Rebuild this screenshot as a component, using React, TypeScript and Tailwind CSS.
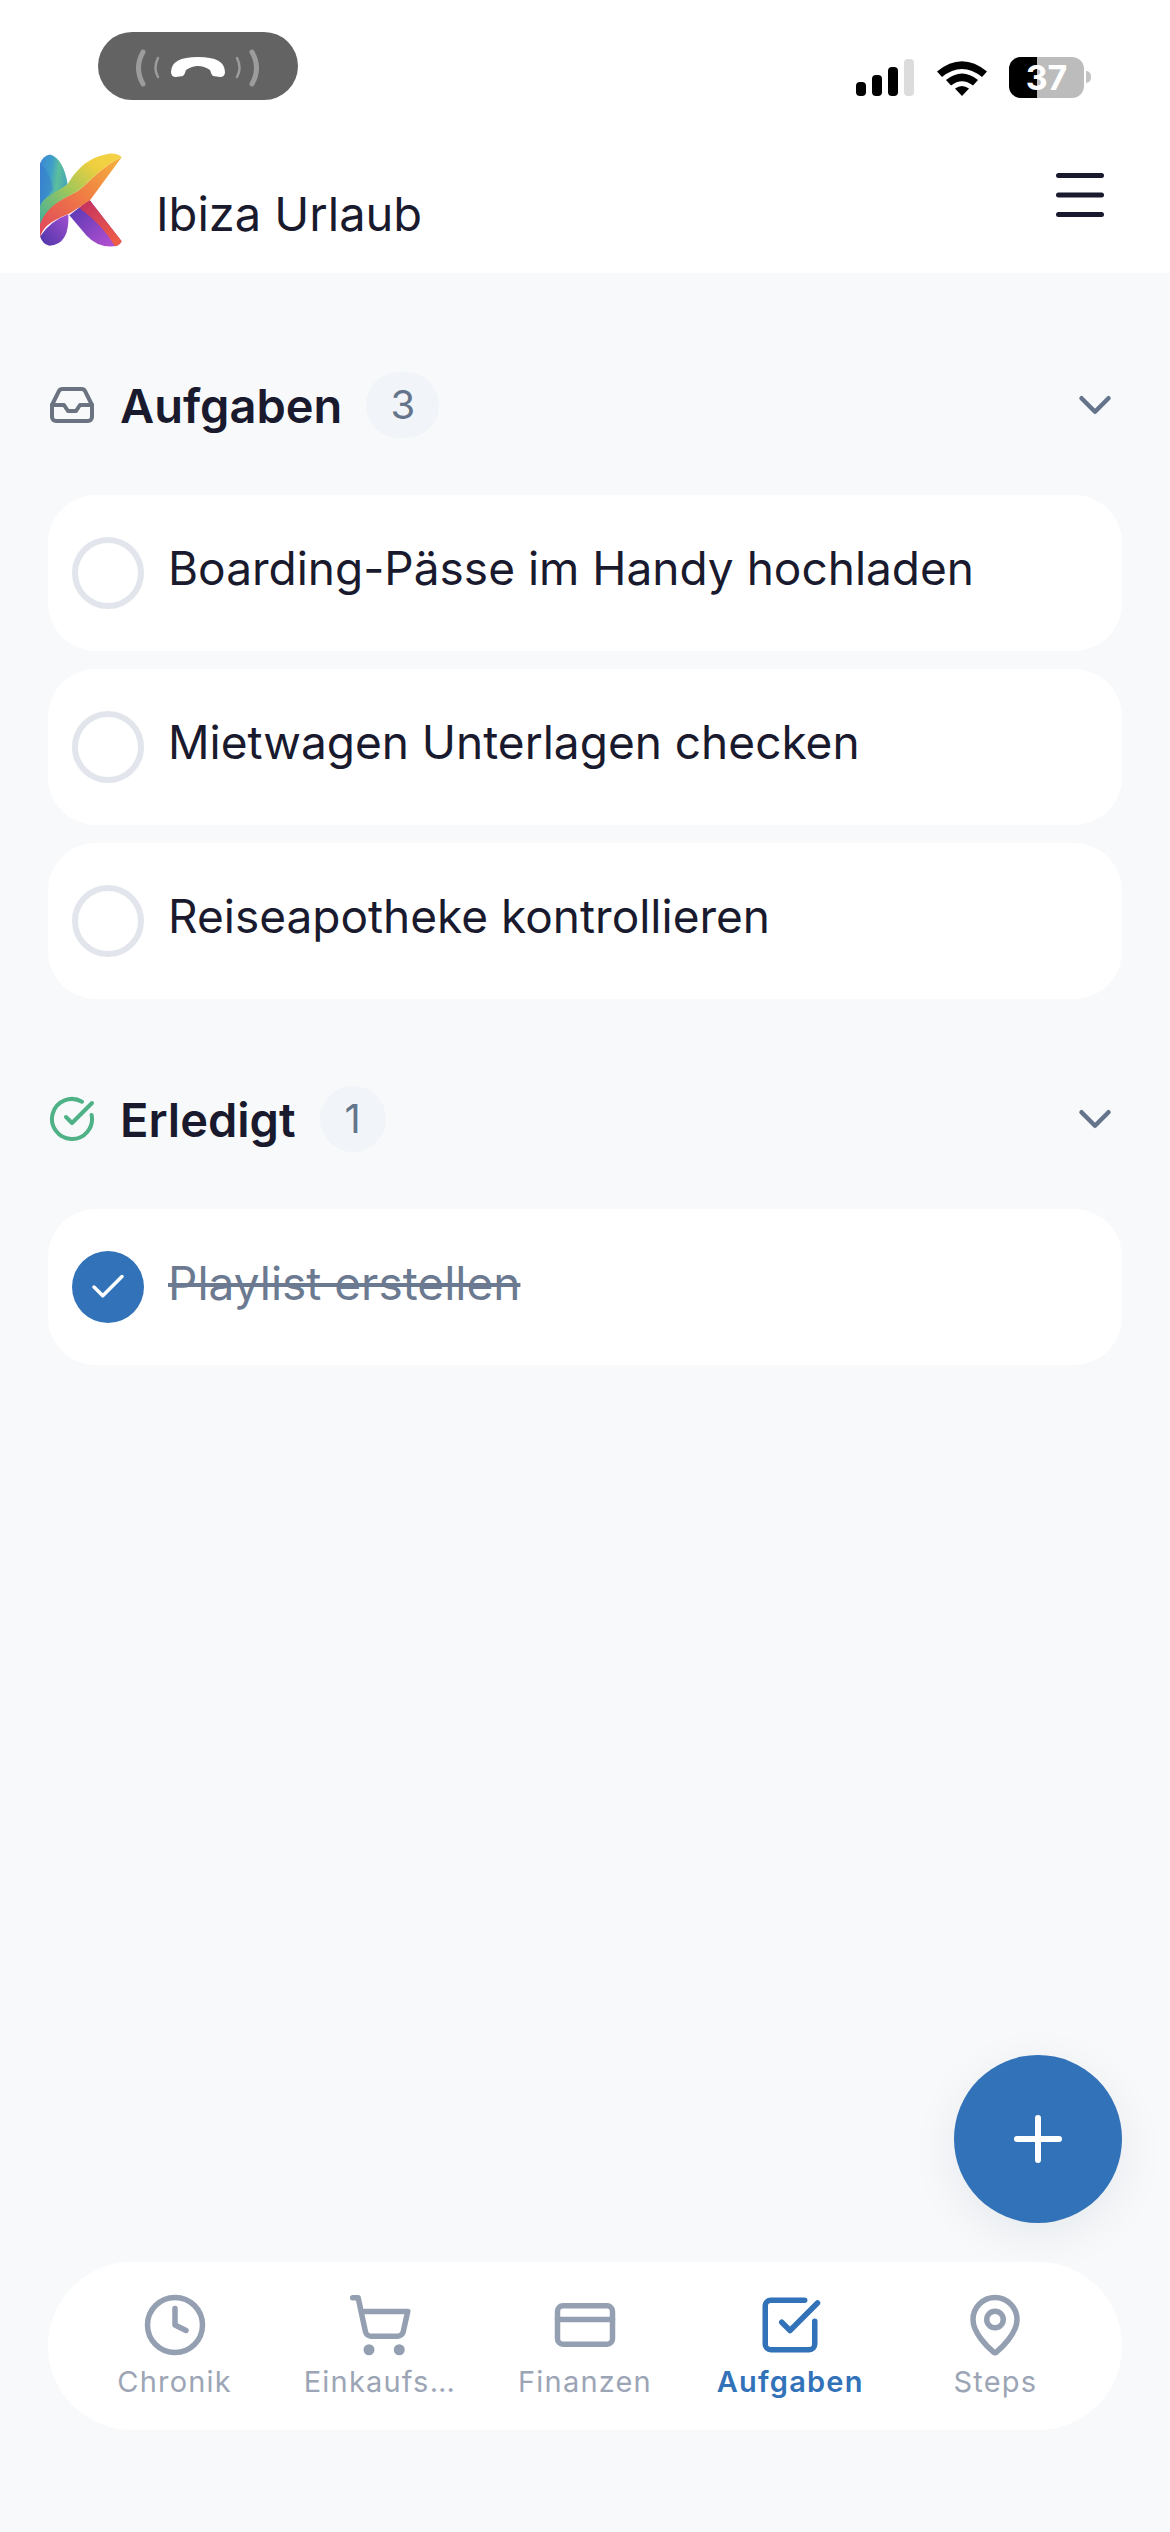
import { Inbox, CircleCheckBig, ChevronDown, Check, Plus, Clock, ShoppingCart, CreditCard, SquareCheckBig, MapPin } from "lucide-react";

function Logo() {
  return (
    <svg viewBox="60 73 246 282" className="w-[82px] h-[95px]">
      <defs>
        <linearGradient id="stem" x1="0" y1="0" x2="1" y2="0.25">
          <stop offset="0" stopColor="#3b86d6" />
          <stop offset="0.45" stopColor="#3f9fc8" />
          <stop offset="0.7" stopColor="#5cbf9c" />
          <stop offset="1" stopColor="#49a9b4" />
        </linearGradient>
        <linearGradient id="foot" x1="0" y1="1" x2="1" y2="0">
          <stop offset="0" stopColor="#4c35a8" />
          <stop offset="1" stopColor="#a24fd0" />
        </linearGradient>
        <linearGradient id="top" x1="0" y1="1" x2="1" y2="0">
          <stop offset="0" stopColor="#3fae9c" />
          <stop offset="0.4" stopColor="#9cc65c" />
          <stop offset="0.75" stopColor="#f0cf3e" />
          <stop offset="1" stopColor="#f5d24a" />
        </linearGradient>
        <linearGradient id="mid" x1="0" y1="1" x2="1" y2="0">
          <stop offset="0" stopColor="#e0455e" />
          <stop offset="0.5" stopColor="#ef7a45" />
          <stop offset="1" stopColor="#f5b43c" />
        </linearGradient>
        <linearGradient id="legl" x1="0" y1="0" x2="1" y2="1">
          <stop offset="0" stopColor="#4f37b0" />
          <stop offset="1" stopColor="#bd52d4" />
        </linearGradient>
        <linearGradient id="legr" x1="0" y1="0" x2="0.7" y2="1">
          <stop offset="0" stopColor="#c22f63" />
          <stop offset="1" stopColor="#ee5c46" />
        </linearGradient>
      </defs>
      <path d="M60 102 Q70 80 90 76 Q130 88 143 165 L60 236 Z" fill="url(#stem)" />
      <path d="M60 102 Q88 125 100 180 L60 225 Z" fill="#3570c8" opacity="0.35" />
      <path d="M60 322 Q90 275 145 255 Q150 345 88 350 Q68 345 60 322 Z" fill="url(#foot)" />
      <path d="M148 258 L208 212 L305 336 Q298 352 270 352 Q230 352 200 320 Z" fill="url(#legl)" />
      <path d="M178 236 L208 212 L305 336 Q298 350 285 351 Q250 290 178 236 Z" fill="url(#legr)" />
      <path d="M60 325 C70 290 95 275 150 252 L210 213 L305 84 C255 105 215 150 175 185 C130 210 85 225 60 270 Z" fill="url(#mid)" />
      <path d="M60 236 C65 205 100 195 143 165 C165 130 195 85 270 73 Q295 72 305 84 C255 105 215 150 175 185 C130 210 85 225 60 285 Z" fill="url(#top)" />
    </svg>
  );
}

function StatusIcons() {
  return (
    <div className="flex items-start">
      <div className="flex items-end gap-[6px] h-[37px] mt-[27px]">
        <div className="w-[10px] h-[14px] rounded-[4px] bg-black" />
        <div className="w-[10px] h-[21px] rounded-[4px] bg-black" />
        <div className="w-[10px] h-[29px] rounded-[4px] bg-black" />
        <div className="w-[10px] h-[37px] rounded-[4px] bg-[#dcdcdc]" />
      </div>
      <svg viewBox="0 0 50 37" className="w-[50px] h-[37px] mt-[27px] ml-[23px]">
        <path d="M0 12.5 Q25 -8 50 12.5 L45 18 Q25 2 5 18 Z" fill="#000" />
        <path d="M9 21 Q25 8 41 21 L36 26.5 Q25 18 14 26.5 Z" fill="#000" />
        <path d="M18 29.5 Q25 24.5 32 29.5 L25 37 Z" fill="#000" />
      </svg>
      <div className="relative w-[75px] h-[41px] mt-[25px] ml-[22px] rounded-[12px] overflow-hidden bg-[#bcbcbc] flex items-center justify-center">
        <div className="absolute left-0 top-0 bottom-0 w-[28px] bg-black" />
        <span className="relative text-white font-bold text-[34px] leading-none font-['Inter',sans-serif]">37</span>
      </div>
      <div className="w-[5px] h-[12px] mt-[39px] ml-[2px] rounded-r-full bg-[#c4c4c4]" />
    </div>
  );
}

function CallPill() {
  return (
    <div className="w-[200px] h-[68px] ml-[98px] rounded-[34px] bg-[#636363] flex items-center justify-center">
      <svg viewBox="0 0 200 68" className="w-[200px] h-[68px]">
        <g fill="none" stroke="#9c9c9c" strokeLinecap="round">
          <path d="M45 20 Q36 36 45 52" strokeWidth="5" />
          <path d="M60 26 Q55 36 60 45" strokeWidth="2.5" />
          <path d="M139 26 Q144 36 139 45" strokeWidth="2.5" />
          <path d="M154 20 Q163 36 154 52" strokeWidth="5" />
        </g>
        <path d="M73 40 Q73 25 100 25 Q127 25 127 40 Q127 45 122 45 L115 44 Q113 42 112 38 Q106 34 100 34 Q94 34 88 38 Q87 42 85 44 L78 45 Q73 45 73 40 Z" fill="#fff" />
      </svg>
    </div>
  );
}

function SectionHeader({ icon, title, count }: { icon: React.ReactNode; title: string; count: number }) {
  return (
    <div className="flex items-center h-[66px] mb-[57px]">
      {icon}
      <h2 className="ml-6 text-[47px] leading-none font-semibold text-[#1a1a2e]">{title}</h2>
      <span className="ml-6 h-[66px] min-w-[66px] px-6 rounded-full bg-[#f1f4f8] flex items-center justify-center text-[40px] leading-none text-[#64748b]">{count}</span>
      <ChevronDown className="ml-auto text-[#64748b]" size={54} strokeWidth={2} />
    </div>
  );
}

function Task({ text, done }: { text: string; done?: boolean }) {
  return (
    <div className="h-[156px] rounded-[48px] bg-white flex items-center pl-6 gap-6">
      {done ? (
        <div className="w-[72px] h-[72px] rounded-full bg-[#3272b8] flex items-center justify-center">
          <Check className="text-white" size={42} strokeWidth={2} />
        </div>
      ) : (
        <div className="w-[72px] h-[72px] rounded-full border-[6px] border-[#e2e6ec]" />
      )}
      <span className={done ? "text-[46px] leading-none text-[#6b7a90] line-through -mt-[9px]" : "text-[46px] leading-none text-[#1a1a2e] -mt-[10px]"}>{text}</span>
    </div>
  );
}

function NavItem({ icon, label, active }: { icon: React.ReactNode; label: string; active?: boolean }) {
  return (
    <div className="flex-1 flex flex-col items-center">
      {icon}
      <span className={active ? "mt-[6px] text-[29px] leading-[36px] font-semibold tracking-[1.2px] text-[#3272b8]" : "mt-[6px] text-[29px] leading-[36px] tracking-[1.2px] text-[#9ca5b5]"}>{label}</span>
    </div>
  );
}

export default function App() {
  return (
    <div className="w-[1170px] h-[2532px] bg-[#f7f9fb] flex flex-col font-['Inter',sans-serif]">
      <header className="h-[273px] bg-white pt-[32px] shrink-0">
        <div className="flex items-start justify-between h-[68px]">
          <CallPill />
          <div className="mr-[79px]"><StatusIcons /></div>
        </div>
        <div className="flex items-start mt-[53px] pl-[40px] pr-[66px] h-[95px]">
          <Logo />
          <h1 className="ml-[34px] mt-[37px] text-[47px] leading-none text-[#1a1a2e]">Ibiza Urlaub</h1>
          <svg viewBox="0 0 48 44" className="ml-auto mt-[20px] w-[48px] h-[44px]">
            <g stroke="#1a1a2e" strokeWidth="5" strokeLinecap="round">
              <line x1="2.5" y1="2.5" x2="45.5" y2="2.5" />
              <line x1="2.5" y1="22" x2="45.5" y2="22" />
              <line x1="2.5" y1="41.5" x2="45.5" y2="41.5" />
            </g>
          </svg>
        </div>
      </header>
      <main className="flex-1 px-12 pt-[99px]">
        <SectionHeader icon={<Inbox className="text-[#6b7280]" size={48} strokeWidth={2} />} title="Aufgaben" count={3} />
        <div className="flex flex-col gap-[18px]">
          <Task text="Boarding-Pässe im Handy hochladen" />
          <Task text="Mietwagen Unterlagen checken" />
          <Task text="Reiseapotheke kontrollieren" />
        </div>
        <div className="mt-[87px]">
          <SectionHeader icon={<CircleCheckBig className="text-[#4fb286]" size={48} strokeWidth={2} />} title="Erledigt" count={1} />
          <Task text="Playlist erstellen" done />
        </div>
      </main>
      <div className="flex justify-end px-12 mb-[39px]">
        <button className="w-[168px] h-[168px] rounded-full bg-[#3272b8] flex items-center justify-center shadow-[0_12px_48px_rgba(15,23,42,0.07)]">
          <Plus className="text-white" size={72} strokeWidth={2} />
        </button>
      </div>
      <nav className="mx-12 mb-[102px] h-[168px] rounded-[84px] bg-white px-6 pt-[30px] flex">
        <NavItem icon={<Clock className="text-[#94a0b2]" size={66} strokeWidth={2} />} label="Chronik" />
        <NavItem icon={<ShoppingCart className="text-[#94a0b2]" size={66} strokeWidth={2} />} label="Einkaufs…" />
        <NavItem icon={<CreditCard className="text-[#94a0b2]" size={66} strokeWidth={2} />} label="Finanzen" />
        <NavItem icon={<SquareCheckBig className="text-[#3272b8]" size={66} strokeWidth={2} />} label="Aufgaben" active />
        <NavItem icon={<MapPin className="text-[#94a0b2]" size={66} strokeWidth={2} />} label="Steps" />
      </nav>
    </div>
  );
}
